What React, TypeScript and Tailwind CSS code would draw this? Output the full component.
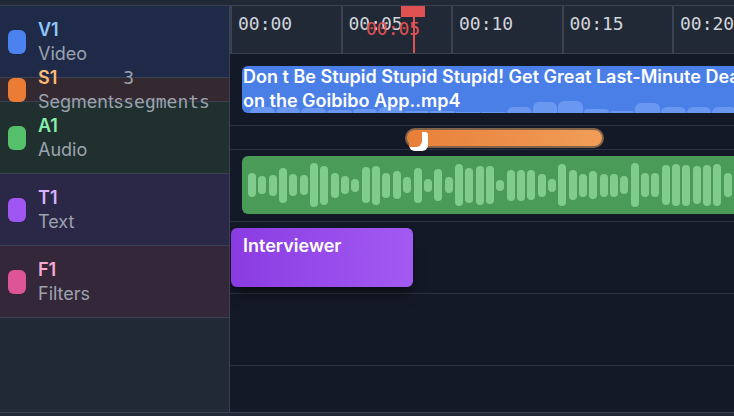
const tracks = [
  { id: "V1", name: "Video", row: "h-[72px] bg-[#1f2a48]", pill: "bg-[#4b82ef]", label: "text-[#93c5fd]" },
  { id: "S1", name: "Segments", row: "h-[24px] bg-[#342930]", pill: "bg-[#ea7c36]", label: "text-[#fdba74]", extra: "3 segments" },
  { id: "A1", name: "Audio", row: "h-[72px] bg-[#20302f]", pill: "bg-[#55c06a]", label: "text-[#86efac]" },
  { id: "T1", name: "Text", row: "h-[72px] bg-[#2b2747]", pill: "bg-[#a056f2]", label: "text-[#d8b4fe]" },
  { id: "F1", name: "Filters", row: "h-[72px] bg-[#35273a]", pill: "bg-[#dd5597]", label: "text-[#f9a8d4]" },
];

const ticks = ["00:00", "00:05", "00:10", "00:15", "00:20", "00:25"];

// thumbnail strip under the video clip
const thumbs = [6, 6, 5, 3, 4, 6, 2, 2, 1, 1, 6, 11, 12, 4, 2, 10, 6, 6, 6, 5];

// audio peaks in px
const peaks = [
  24, 18, 21, 35, 22, 20, 44, 39, 25, 18, 13, 36, 39, 25, 28, 16, 35, 13, 32, 16, 42, 35, 39, 38,
  11, 31, 31, 30, 23, 13, 42, 30, 23, 28, 23, 23, 18, 44, 24, 24, 40, 42, 41, 38, 41, 42, 24, 30,
];

function TrackHeader({ t }: { t: (typeof tracks)[number] }) {
  return (
    <div className={`flex items-center px-2 border-b border-[#3a4152] ${t.row}`}>
      <div className={`w-[18px] h-6 rounded-md shrink-0 ${t.pill}`} />
      <div className="ml-3 text-lg leading-6">
        <div className={`font-semibold ${t.label}`}>{t.id}</div>
        <div className="text-[#9ca3af]">{t.name}</div>
      </div>
      {t.extra && (
        <div className="font-['DejaVu_Sans_Mono',monospace] text-lg leading-6 text-[#9ca3af]">{t.extra}</div>
      )}
    </div>
  );
}

export default function App() {
  return (
    <div className="w-[734px] h-[416px] overflow-hidden bg-[#212836] font-[Inter,sans-serif] flex flex-col">
      <div className="h-[6px] shrink-0 border-b border-[#394152]" />

      <div className="flex h-[406px] shrink-0">
        {/* track list */}
        <div className="w-[230px] shrink-0 border-r border-[#3a4152]">
          {tracks.map((t) => (
            <TrackHeader key={t.id} t={t} />
          ))}
        </div>

        {/* timeline */}
        <div className="relative flex-1 overflow-hidden bg-[#131926]">
          <div className="flex h-[48px] bg-[#212836] border-b border-[#3b4352]">
            {ticks.map((tk) => (
              <div
                key={tk}
                className="w-[110.5px] shrink-0 border-l-2 border-[#3b4352] pl-1.5 pt-1 font-['DejaVu_Sans_Mono',monospace] text-lg leading-7 text-[#d1d5db]"
              >
                {tk}
              </div>
            ))}
          </div>

          {/* video */}
          <div className="h-[72px] border-b border-[#2a3140] pt-3 pl-3">
            <div className="relative w-[600px] h-[47px] rounded-md bg-[#4a7fe8] overflow-hidden">
              <div className="absolute inset-x-0 bottom-0 flex items-end gap-px pl-2 h-3">
                {thumbs.map((h, i) => (
                  <div key={i} className="w-[24.7px] shrink-0 rounded-t-md bg-[#6a97f0]" style={{ height: h }} />
                ))}
              </div>
              <div className="relative pl-px -mt-px text-lg leading-6 font-semibold text-white whitespace-nowrap">
                <div>Don t Be Stupid Stupid Stupid! Get Great Last-Minute Deals</div>
                <div>on the Goibibo App..mp4</div>
              </div>
            </div>
          </div>

          {/* segments */}
          <div className="h-[24px] border-b border-[#2a3140] pt-[2px]">
            <div className="relative ml-[175px] w-[199px] h-5 rounded-full border-2 border-[#806349] bg-linear-to-r from-[#e8803a] to-[#f09d58]">
              <div className="absolute left-[2px] top-[2px] w-[19px] h-[19px] rounded-b-[6px] rounded-tr-[3px] bg-white">
                <div className="w-[13px] h-[15px] rounded-br-[6px] bg-[#e8803a]" />
              </div>
            </div>
          </div>

          {/* audio */}
          <div className="h-[72px] border-b border-[#2a3140] pt-1.5 pl-3">
            <div className="w-[600px] h-[58px] rounded-md bg-[#4a9a58] flex items-center gap-[2.35px] pl-[6px]">
              {peaks.map((p, i) => (
                <div key={i} className="w-[8px] shrink-0 rounded-full bg-[#80cc8d]" style={{ height: p }} />
              ))}
            </div>
          </div>

          {/* text */}
          <div className="h-[72px] border-b border-[#2a3140] pt-1.5 pl-px">
            <div className="w-[182px] h-[59px] rounded-md bg-linear-to-r from-[#8a3be2] to-[#a35af2] px-3 pt-1.5 text-lg leading-6 font-semibold text-white shadow-lg shadow-black/40">
              Interviewer
            </div>
          </div>

          {/* filters */}
          <div className="h-[72px] border-b border-[#2a3140]" />

          {/* playhead */}
          <div className="absolute left-[171px] top-0 w-6 h-[11px] bg-[#e05252]" />
          <div className="absolute left-[183px] top-0 w-[2px] h-[47px] bg-[#e05252]" />
          <div className="absolute left-[136px] top-[9px] font-['DejaVu_Sans_Mono',monospace] text-lg leading-7 text-[#e05252]">
            00:05
          </div>
        </div>
      </div>

      <div className="h-[4px] shrink-0 border-t border-[#3a4152]" />
    </div>
  );
}
